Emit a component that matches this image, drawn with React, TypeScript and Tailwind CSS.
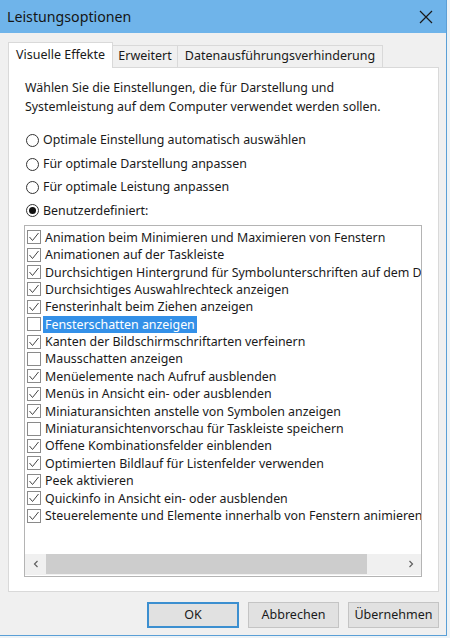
import React from "react";

type Item = { label: string; checked: boolean; selected?: boolean };

const items: Item[] = [
  { label: "Animation beim Minimieren und Maximieren von Fenstern", checked: true },
  { label: "Animationen auf der Taskleiste", checked: true },
  { label: "Durchsichtigen Hintergrund für Symbolunterschriften auf dem Desktop", checked: true },
  { label: "Durchsichtiges Auswahlrechteck anzeigen", checked: true },
  { label: "Fensterinhalt beim Ziehen anzeigen", checked: true },
  { label: "Fensterschatten anzeigen", checked: false, selected: true },
  { label: "Kanten der Bildschirmschriftarten verfeinern", checked: true },
  { label: "Mausschatten anzeigen", checked: false },
  { label: "Menüelemente nach Aufruf ausblenden", checked: true },
  { label: "Menüs in Ansicht ein- oder ausblenden", checked: true },
  { label: "Miniaturansichten anstelle von Symbolen anzeigen", checked: true },
  { label: "Miniaturansichtenvorschau für Taskleiste speichern", checked: false },
  { label: "Offene Kombinationsfelder einblenden", checked: true },
  { label: "Optimierten Bildlauf für Listenfelder verwenden", checked: true },
  { label: "Peek aktivieren", checked: true },
  { label: "Quickinfo in Ansicht ein- oder ausblenden", checked: true },
  { label: "Steuerelemente und Elemente innerhalb von Fenstern animieren", checked: true },
];

const radios = [
  { label: "Optimale Einstellung automatisch auswählen", on: false },
  { label: "Für optimale Darstellung anpassen", on: false },
  { label: "Für optimale Leistung anpassen", on: false },
  { label: "Benutzerdefiniert:", on: true },
];

function Radio({ on }: { on: boolean }) {
  return (
    <span className="w-[13px] h-[13px] rounded-full border border-[#333] bg-white flex items-center justify-center shrink-0">
      {on && <span className="w-[7px] h-[7px] rounded-full bg-[#111]" />}
    </span>
  );
}

function Check({ checked }: { checked: boolean }) {
  return (
    <span className="w-[14px] h-[14px] border border-[#8a8a8a] bg-white shrink-0 flex items-center justify-center">
      {checked && (
        <svg width="12" height="12" viewBox="0 0 12 12">
          <polyline points="1.5,6 4.5,9.5 10.5,2" fill="none" stroke="#444" strokeWidth="1" />
        </svg>
      )}
    </span>
  );
}

export default function App() {
  return (
    <div className="w-[450px] h-[638px] bg-[#eef3f6] font-['Noto_Sans',sans-serif] text-[#1a1a1a] overflow-hidden">
      <div className="w-[447px] h-[636px] bg-[#f0f0f0] border-r border-b border-[#5a9fd6] flex flex-col">
        {/* Title bar */}
        <div className="h-[33px] bg-[#6fb4ea] flex items-center justify-between pl-[7px] pr-[13px] shrink-0">
          <span className="text-[14.2px] text-[#151515]">Leistungsoptionen</span>
          <svg width="14" height="14" viewBox="0 0 14 14">
            <path d="M1 1 L13 13 M13 1 L1 13" stroke="#1a1a1a" strokeWidth="1.2" />
          </svg>
        </div>

        {/* Tabs + panel */}
        <div className="pt-[9px] pl-[8px] pr-[7px]">
          <div className="flex items-end h-[25px] text-[12.5px]">
            <div className="relative z-10 -mb-px h-[26px] w-[105px] bg-white border border-b-0 border-[#d9d9d9] flex items-center justify-center pb-[1px]">
              Visuelle Effekte
            </div>
            <div className="h-[22px] w-[65px] bg-[#f0f0f0] border border-l-0 border-b-0 border-[#d9d9d9] flex items-center justify-center">
              Erweitert
            </div>
            <div className="h-[22px] w-[205px] bg-[#f0f0f0] border border-l-0 border-b-0 border-[#d9d9d9] flex items-center justify-center">
              Datenausführungsverhinderung
            </div>
          </div>

          <div className="bg-white border border-[#d9d9d9] h-[525px] pl-[16px] pt-[10px] text-[12.4px]">
            <p className="leading-[19px]">
              Wählen Sie die Einstellungen, die für Darstellung und
              <br />
              Systemleistung auf dem Computer verwendet werden sollen.
            </p>

            <div className="mt-[13px] flex flex-col">
              {radios.map((r) => (
                <div key={r.label} className="h-[23.4px] flex items-center gap-[4px] pl-[1px]">
                  <Radio on={r.on} />
                  <span>{r.label}</span>
                </div>
              ))}
            </div>

            <div className="mt-[2px] -ml-px w-[398px] h-[352px] border border-[#b4b4b4] flex flex-col overflow-hidden">
              <div className="flex-1 pt-[3px] pl-[2px] overflow-hidden">
                {items.map((it) => (
                  <div key={it.label} className="h-[17.4px] flex items-center whitespace-nowrap">
                    <Check checked={it.checked} />
                    <span
                      className={
                        it.selected
                          ? "ml-[2px] px-[2px] bg-[#3390e8] text-white leading-[17px]"
                          : "ml-[2px] px-[2px] leading-[17px]"
                      }
                    >
                      {it.label}
                    </span>
                  </div>
                ))}
              </div>
              <div className="h-[21px] bg-[#f0f0f0] flex items-center shrink-0 mb-px">
                <div className="w-[21px] flex items-center justify-center">
                  <svg width="6" height="8" viewBox="0 0 6 8">
                    <path d="M4.5 1 L1.5 4 L4.5 7" fill="none" stroke="#606060" strokeWidth="1.2" />
                  </svg>
                </div>
                <div className="w-[321px] h-[20px] bg-[#cdcdcd]" />
                <div className="flex-1" />
                <div className="w-[21px] flex items-center justify-center">
                  <svg width="6" height="8" viewBox="0 0 6 8">
                    <path d="M1.5 1 L4.5 4 L1.5 7" fill="none" stroke="#606060" strokeWidth="1.2" />
                  </svg>
                </div>
              </div>
            </div>
          </div>
        </div>

        {/* Buttons */}
        <div className="flex justify-end gap-[9px] pr-[7px] pt-[10px] text-[12.5px]">
          <button className="w-[92px] h-[26px] bg-[#e1e1e1] border-2 border-[#3c8fd0] flex items-center justify-center">
            OK
          </button>
          <button className="w-[91px] h-[26px] bg-[#e1e1e1] border border-[#c4c4c4] flex items-center justify-center">
            Abbrechen
          </button>
          <button className="w-[91px] h-[26px] bg-[#e1e1e1] border border-[#c4c4c4] flex items-center justify-center">
            Übernehmen
          </button>
        </div>
      </div>
    </div>
  );
}
